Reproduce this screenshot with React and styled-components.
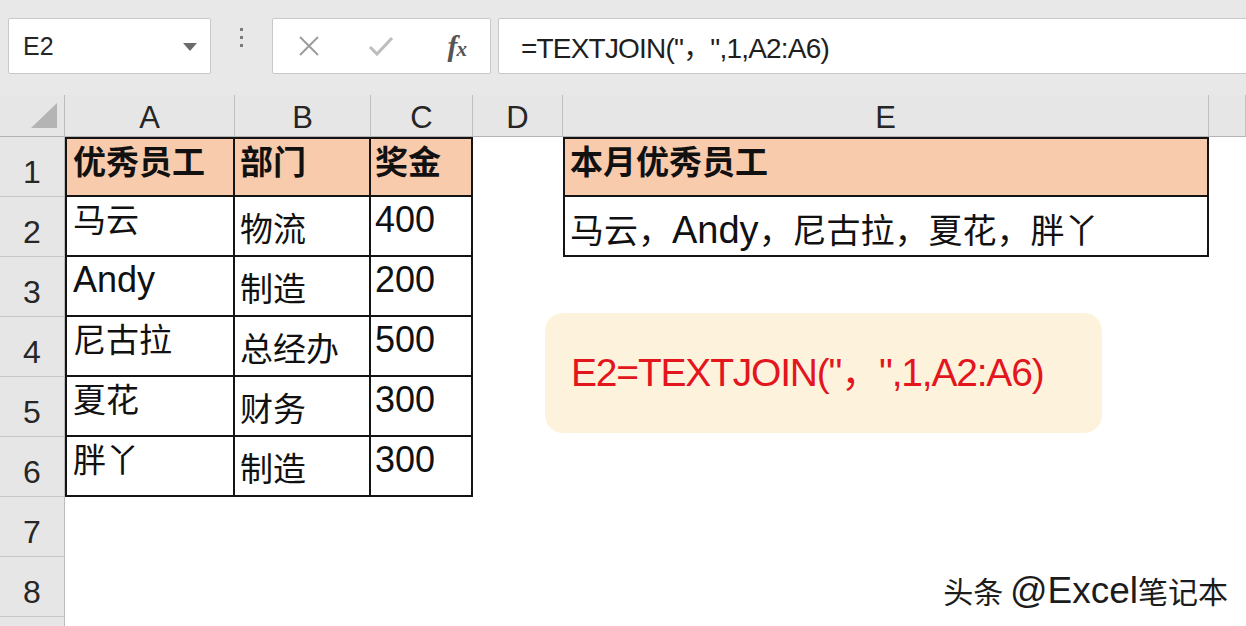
import React from 'react';
import styled, { createGlobalStyle } from 'styled-components';

const Global = createGlobalStyle`
  html, body { margin: 0; padding: 0; background: #fff; }
  body { width: 1246px; height: 626px; overflow: hidden; }
`;

const CJK = `"Noto Sans CJK SC", "Liberation Sans", sans-serif`;
const LAT = `"Liberation Sans", "Noto Sans CJK SC", sans-serif`;

const Page = styled.div`
  position: relative;
  width: 1246px;
  height: 626px;
  overflow: hidden;
  background: #e8e8e8;
  display: flex;
  flex-direction: column;
  font-family: ${LAT};
`;

const Toolbar = styled.div`
  height: 95px;
  flex: none;
  box-sizing: border-box;
  padding: 18px 0 0 8px;
  display: flex;
  align-items: flex-start;
`;

const Box = styled.div`
  height: 56px;
  box-sizing: border-box;
  background: #fff;
  border: 1px solid #c8c8c8;
  border-radius: 2px;
  display: flex;
  align-items: center;
  flex: none;
`;

const NameBox = styled(Box)`
  width: 203px;
  padding: 0 13px 0 14px;
  justify-content: space-between;
  font-size: 25px;
  color: #262626;
`;

const Caret = styled.span`
  width: 0;
  height: 0;
  border-left: 7px solid transparent;
  border-right: 7px solid transparent;
  border-top: 8px solid #6b6b6b;
  margin-top: 2px;
`;

const Grip = styled.div`
  width: 61px;
  flex: none;
  display: flex;
  flex-direction: column;
  align-items: center;
  gap: 5px;
  padding-top: 10px;
`;

const GripDot = styled.span`
  width: 3px;
  height: 3px;
  background: #7a7a7a;
`;

const ButtonsBox = styled(Box)`
  width: 219px;
  display: grid;
  grid-template-columns: repeat(3, 1fr);
  justify-items: center;
  align-items: center;
`;

const Fx = styled.span`
  font-family: "Liberation Serif", serif;
  font-style: italic;
  font-weight: 700;
  font-size: 30px;
  color: #555;
  letter-spacing: -1px;
  margin-left: 6px;
  & > small {
    font-size: 21px;
  }
`;

const FormulaBox = styled(Box)`
  margin-left: 7px;
  flex: 1;
  margin-right: -10px;
  padding-left: 22px;
  font-size: 28px;
  letter-spacing: -0.8px;
  color: #1e1e1e;
`;

const Sheet = styled.div`
  flex: 1;
  display: grid;
  grid-template-columns: 65px 170px 136px 102px 90px 646px 1fr;
  grid-template-rows: 42px repeat(9, 60px);
  background: #fff;
`;

const Corner = styled.div`
  background: #e6e6e6;
  border-right: 1px solid #bcbcbc;
  border-bottom: 1px solid #b4b4b4;
  box-sizing: border-box;
  display: flex;
  justify-content: flex-end;
  align-items: flex-end;
  padding: 0 7px 8px 0;
`;

const CornerMark = styled.span`
  width: 26px;
  height: 25px;
  background: #b4b4b4;
  clip-path: polygon(100% 0, 100% 100%, 0 100%);
`;

const ColHead = styled.div`
  background: #e6e6e6;
  border-right: 1px solid #c0c0c0;
  border-bottom: 1px solid #b4b4b4;
  box-sizing: border-box;
  display: flex;
  justify-content: center;
  align-items: flex-end;
  padding-bottom: 3px;
  font-size: 31px;
  line-height: 1;
  color: #262626;
`;

const RowHead = styled.div`
  background: #e6e6e6;
  border-right: 1px solid #bcbcbc;
  border-bottom: 1px solid #c6c6c6;
  box-sizing: border-box;
  display: flex;
  justify-content: center;
  align-items: flex-end;
  padding-bottom: 8px;
  font-size: 32px;
  line-height: 1;
  color: #262626;
`;

const Cell = styled.div`
  box-sizing: border-box;
  background: ${(p) => (p.$fill ? '#f8cbad' : '#fff')};
  border-right: ${(p) => (p.$b ? '2px solid #141414' : 'none')};
  border-bottom: ${(p) => (p.$b ? '2px solid #141414' : 'none')};
  border-left: ${(p) => (p.$bl ? '2px solid #141414' : 'none')};
  border-top: ${(p) => (p.$bt ? '2px solid #141414' : 'none')};
  padding: ${(p) => p.$pt}px 0 0 ${(p) => p.$pl}px;
  font-family: ${CJK};
  font-size: ${(p) => p.$size || 33}px;
  font-weight: ${(p) => (p.$bold ? 700 : 400)};
  line-height: 1;
  color: #111;
  white-space: nowrap;
  overflow: visible;
`;

const Latin = styled.span`
  font-family: ${LAT};
  font-size: ${(p) => p.$size || 36}px;
`;

const Callout = styled.div`
  position: absolute;
  left: 545px;
  top: 313px;
  width: 557px;
  height: 120px;
  box-sizing: border-box;
  border-radius: 18px;
  background: #fdf3dd;
  display: flex;
  align-items: center;
  padding: 0 0 8px 26px;
  font-family: ${LAT};
  font-size: 39px;
  letter-spacing: -1.2px;
  color: #e3161e;
`;

const Watermark = styled.div`
  position: absolute;
  right: 18px;
  bottom: 17px;
  font-family: ${CJK};
  font-size: 30px;
  line-height: 1;
  color: #1c1c1c;
  text-shadow: -1px 0 0 #fff, 1px 1px 0 rgba(255, 255, 255, 0.8);
  white-space: nowrap;
`;

const WmLatin = styled.span`
  font-family: ${LAT};
  font-size: 37px;
`;

const cols = ['A', 'B', 'C', 'D', 'E', ''];

const table = [
  ['优秀员工', '部门', '奖金'],
  ['马云', '物流', '400'],
  ['Andy', '制造', '200'],
  ['尼古拉', '总经办', '500'],
  ['夏花', '财务', '300'],
  ['胖丫', '制造', '300'],
];

const colPad = [
  { pl: 6, pt: 5 },
  { pl: 5, pt: 14 },
  { pl: 4, pt: 5 },
];

function isLatin(s) {
  return /^[A-Za-z0-9]+$/.test(s);
}

function renderRow(r) {
  const out = [];
  const inTable = r < table.length;
  for (let c = 0; c < 6; c++) {
    const key = `${r}-${c}`;
    if (inTable && c < 3) {
      const txt = table[r][c];
      const header = r === 0;
      const latin = isLatin(txt);
      out.push(
        <Cell
          key={key}
          $b
          $bl={c === 0}
          $bt={header}
          $fill={header}
          $bold={header}
          $pl={colPad[c].pl}
          $pt={header ? 5 : colPad[c].pt}
        >
          {latin ? <Latin>{txt}</Latin> : txt}
        </Cell>
      );
    } else if (c === 4 && r === 0) {
      out.push(
        <Cell key={key} $b $bl $bt $fill $bold $pl={5} $pt={5}>
          本月优秀员工
        </Cell>
      );
    } else if (c === 4 && r === 1) {
      out.push(
        <Cell key={key} $b $bl $pl={5} $pt={14} $size={34}>
          马云，<Latin $size={38}>Andy</Latin>，尼古拉，夏花，胖丫
        </Cell>
      );
    } else {
      out.push(<Cell key={key} $pl={0} $pt={0} />);
    }
  }
  return out;
}

export default function App() {
  return (
    <Page>
      <Global />
      <Toolbar>
        <NameBox>
          <span>E2</span>
          <Caret />
        </NameBox>
        <Grip>
          <GripDot />
          <GripDot />
          <GripDot />
        </Grip>
        <ButtonsBox>
          <svg width="22" height="22" viewBox="0 0 22 22">
            <path d="M2 2 L20 20 M20 2 L2 20" stroke="#9c9c9c" strokeWidth="2" fill="none" />
          </svg>
          <svg width="26" height="22" viewBox="0 0 26 22">
            <path d="M2 12 L9 19 L24 3" stroke="#bdbdbd" strokeWidth="3" fill="none" />
          </svg>
          <Fx>
            f<small>x</small>
          </Fx>
        </ButtonsBox>
        <FormulaBox>=TEXTJOIN("，",1,A2:A6)</FormulaBox>
      </Toolbar>
      <Sheet>
        <Corner>
          <CornerMark />
        </Corner>
        {cols.map((c, i) => (
          <ColHead key={i}>{c}</ColHead>
        ))}
        {Array.from({ length: 9 }, (_, r) => (
          <React.Fragment key={r}>
            <RowHead>{r < 8 ? r + 1 : ''}</RowHead>
            {renderRow(r)}
          </React.Fragment>
        ))}
      </Sheet>
      <Callout>E2=TEXTJOIN("，",1,A2:A6)</Callout>
      <Watermark>
        头条 <WmLatin>@Excel</WmLatin>笔记本
      </Watermark>
    </Page>
  );
}
